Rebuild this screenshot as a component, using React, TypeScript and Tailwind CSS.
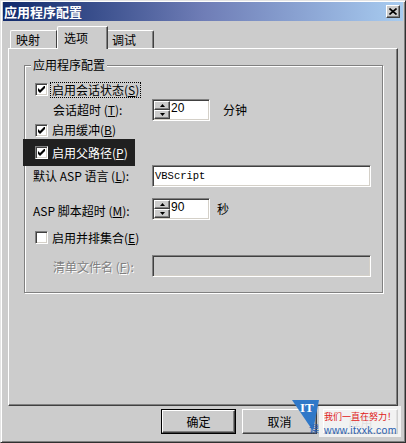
import React from "react";

const SUNKEN =
  "border border-t-[#808080] border-l-[#808080] border-r-white border-b-white shadow-[inset_1px_1px_0_#404040,inset_-1px_-1px_0_#d4d0c8]";
const RAISED =
  "border border-t-white border-l-white border-r-[#404040] border-b-[#404040] shadow-[inset_-1px_-1px_0_#808080]";

function Acc({ text, k }: { text: string; k: string }) {
  return (
    <>
      {text}(<span className="underline underline-offset-1">{k}</span>)
    </>
  );
}

function CheckBox({ checked }: { checked?: boolean }) {
  return (
    <span
      className={`flex h-[13px] w-[13px] shrink-0 items-center justify-center bg-white ${SUNKEN}`}
    >
      {checked && (
        <svg width="7" height="7" viewBox="0 0 7 7">
          <path d="M0 2 L2 4 L7 -1 L7 2 L2 7 L0 5 Z" fill="#000" />
        </svg>
      )}
    </span>
  );
}

function SpinBtn({ up }: { up?: boolean }) {
  return (
    <div className={`flex h-[9px] w-[16px] items-center justify-center bg-[#cccccc] ${RAISED}`}>
      <svg width="5" height="3" viewBox="0 0 5 3">
        {up ? <path d="M2.5 0 L5 3 L0 3 Z" fill="#000" /> : <path d="M0 0 L5 0 L2.5 3 Z" fill="#000" />}
      </svg>
    </div>
  );
}

function Spinner({ value }: { value: string }) {
  return (
    <div className={`flex h-[22px] w-[58px] bg-white p-[1px] ${SUNKEN}`}>
      <div className="flex flex-col">
        <SpinBtn up />
        <SpinBtn />
      </div>
      <span className="pl-[1px] font-['Liberation_Sans',sans-serif] text-[12px] leading-[14px] text-black">
        {value}
      </span>
    </div>
  );
}

export default function App() {
  return (
    <div className="relative h-[443px] w-[406px] overflow-hidden border border-t-[#e4e4e4] border-l-[#e4e4e4] border-r-[#303030] border-b-[#303030] bg-[#cccccc] px-[2px] pt-[1px] font-['Noto_Sans_CJK_SC',sans-serif] text-[12px] text-black shadow-[inset_1px_1px_0_#fff,inset_-1px_-1px_0_#808080]">
      {/* title bar */}
      <div className="flex h-[19px] items-center justify-between bg-linear-to-r from-[#10296a] via-[#6f7db6] to-[#a8ccf0] pl-[1px] pr-[3px]">
        <span className="text-[13px] font-bold leading-none text-white">应用程序配置</span>
        <div className={`flex h-[13px] w-[14px] items-center justify-center bg-[#cccccc] ${RAISED}`}>
          <svg width="8" height="7" viewBox="0 0 8 7">
            <path d="M0.5 0.5 L7.5 6.5 M7.5 0.5 L0.5 6.5" stroke="#000" strokeWidth="1.6" />
          </svg>
        </div>
      </div>

      {/* tabs */}
      <div className="mt-[5px] flex h-[22px] items-end pl-[7px]">
        <div className="flex h-[18px] w-[47px] items-center rounded-tl-[2px] border-l border-t border-r border-l-white border-t-white border-r-[#404040] pl-[5px] leading-none">
          映射
        </div>
        <div className="relative z-10 -mb-[1px] flex h-[23px] w-[51px] items-center rounded-tl-[2px] border-l border-t border-r border-l-white border-t-white border-r-[#404040] bg-[#cccccc] pb-[1px] pl-[6px] leading-none shadow-[inset_-1px_0_0_#808080]">
          选项
        </div>
        <div className="flex h-[18px] w-[46px] items-center rounded-tr-[2px] border-t border-r border-t-white border-r-[#404040] pl-[4px] leading-none shadow-[inset_-1px_0_0_#808080]">
          调试
        </div>
      </div>

      {/* panel */}
      <div className={`mx-[5px] h-[358px] ${RAISED} pl-[15px] pt-[16px]`}>
        <div className="relative h-[228px] w-[359px] border border-[#808080] shadow-[inset_1px_1px_0_#fff,1px_1px_0_#fff]">
          <span className="absolute -top-[9px] left-[6px] bg-[#cccccc] px-[2px] leading-[16px]">
            应用程序配置
          </span>
          <div className="flex flex-col">
            {/* R1 */}
            <div className="mt-[15px] flex h-[17px] items-center pl-[10px]">
              <CheckBox checked />
              <span className="ml-[2px] flex h-[16px] items-center border border-dotted border-black px-[1px] leading-none">
                <Acc text="启用会话状态" k="S" />
              </span>
            </div>
            {/* R2 */}
            <div className="mt-[1px] flex h-[22px] items-center">
              <span className="w-[127px] pl-[28px] leading-none">
                会话超时 (<span className="underline underline-offset-1">T</span>):
              </span>
              <Spinner value="20" />
              <span className="ml-[13px] leading-none">分钟</span>
            </div>
            {/* R3 */}
            <div className="mt-[1px] flex h-[16px] items-center pl-[10px]">
              <CheckBox checked />
              <span className="ml-[4px] leading-none">
                <Acc text="启用缓冲" k="B" />
              </span>
            </div>
            {/* R4 highlighted */}
            <div className="relative z-10 -ml-[2px] mt-[1px] flex h-[27px] w-[112px] items-center bg-[#202020] pl-[12px]">
              <CheckBox checked />
              <span className="ml-[4px] leading-none text-white">
                <Acc text="启用父路径" k="P" />
              </span>
            </div>
            {/* R5 */}
            <div className="-mt-[1px] flex h-[22px] items-center">
              <span className="w-[127px] pl-[8px] leading-none">
                默认 ASP 语言 (<span className="underline underline-offset-1">L</span>):
              </span>
              <div className={`flex h-[22px] w-[219px] items-center bg-white pl-[2px] ${SUNKEN}`}>
                <span className="font-['Liberation_Mono',monospace] text-[10.5px] leading-none">VBScript</span>
              </div>
            </div>
            {/* R6 */}
            <div className="mt-[11px] flex h-[22px] items-center">
              <span className="w-[127px] pl-[8px] pt-[3px] leading-none">
                ASP 脚本超时 (<span className="underline underline-offset-1">M</span>):
              </span>
              <Spinner value="90" />
              <span className="ml-[7px] leading-none">秒</span>
            </div>
            {/* R7 */}
            <div className="mt-[9px] flex h-[17px] items-center pl-[10px]">
              <CheckBox />
              <span className="ml-[4px] leading-none">
                <Acc text="启用并排集合" k="E" />
              </span>
            </div>
            {/* R8 */}
            <div className="mt-[9px] flex h-[22px] items-center">
              <span className="w-[127px] pl-[28px] pt-[2px] leading-none text-[#808080] text-shadow-[1px_1px_0_#ffffff]">
                清单文件名 (<span className="underline underline-offset-1">F</span>):
              </span>
              <div className={`h-[22px] w-[219px] bg-[#cccccc] ${SUNKEN}`} />
            </div>
          </div>
        </div>
      </div>

      {/* buttons */}
      <div className="mt-[3px] flex justify-end gap-[6px] pr-[5px]">
        <div className="h-[25px] w-[75px] border border-black">
          <div className={`flex h-full w-full items-center justify-center ${RAISED}`}>确定</div>
        </div>
        <div className={`flex h-[25px] w-[75px] items-center justify-center ${RAISED}`}>取消</div>
        <div className={`flex h-[25px] w-[75px] items-center justify-center text-[#808080] ${RAISED}`}>
          应用
        </div>
      </div>

      {/* watermark overlay */}
      <div className="absolute left-[291px] top-[399px] h-[34px] w-[28px]">
        <svg width="28" height="34" viewBox="0 0 28 34" className="absolute left-0 top-0">
          <path d="M0 0 L27 0 L21 31 Z" fill="#2f78c8" />
        </svg>
        <span className="absolute left-[8px] top-[1px] font-['Liberation_Serif',serif] text-[13px] font-bold leading-none text-white">
          IT
        </span>
        <span className="absolute left-[17px] top-[24px] text-[10px] leading-none text-[#2a5fb0]">课</span>
      </div>
      <div className="absolute left-[318px] top-[405px] flex h-[31px] w-[82px] flex-col items-start bg-white/75 pl-[5px] pt-[6px]">
        <span className="text-[9px] leading-none text-[#e02020]">我们一直在努力！</span>
        <span className="mt-[4px] font-['Liberation_Sans',sans-serif] text-[10.5px] leading-none tracking-[0.3px] text-[#2a5fb0]">
          www.itxxk.com
        </span>
      </div>
    </div>
  );
}
